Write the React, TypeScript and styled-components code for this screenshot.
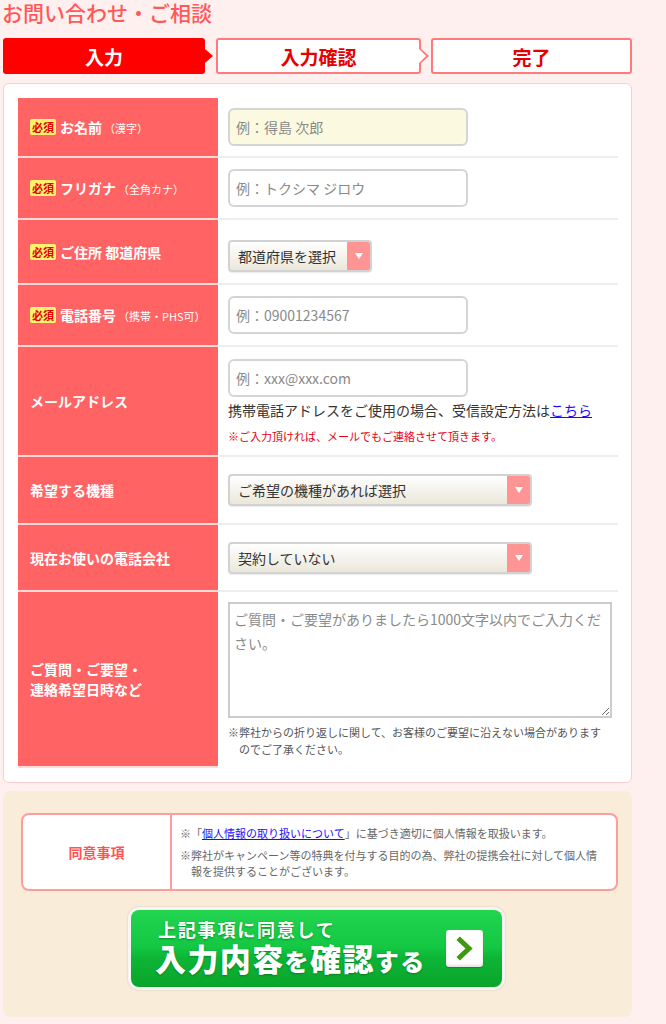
import React from 'react';
import styled, { createGlobalStyle, css } from 'styled-components';

const GlobalStyle = createGlobalStyle`
  * { box-sizing: border-box; }
  body {
    margin: 0;
    background: #fff0f0;
    color: #333;
    font-family: "Noto Sans CJK JP", "Noto Sans", sans-serif;
  }
`;

const FONT = `"Noto Sans CJK JP", "Noto Sans", sans-serif`;

const Page = styled.div`
  width: 632px;
  padding-left: 3px;
`;

const Title = styled.h1`
  margin: 0 0 13px -1px;
  font-size: 21px;
  line-height: 25px;
  font-weight: 500;
  color: #ff5858;
`;

const Steps = styled.ol`
  display: flex;
  list-style: none;
  margin: 0 0 9px;
  padding: 0;
`;

const Step = styled.li<{ $active?: boolean; $arrow?: boolean; $w?: number; $gap?: number }>`
  position: relative;
  ${(p) => (p.$w ? `width: ${p.$w}px; flex-shrink: 0;` : 'flex: 1;')}
  margin-right: ${(p) => p.$gap ?? 0}px;
  height: 36px;
  border-radius: 3px;
  display: flex;
  align-items: center;
  justify-content: center;
  font-size: 19px;
  font-weight: 700;
  ${(p) =>
    p.$active
      ? css`
          background: #ff0000;
          color: #fff;
        `
      : css`
          background: #fff;
          color: #e60000;
          border: 2px solid #ff7a7a;
        `}
  ${(p) =>
    p.$arrow &&
    (p.$active
      ? css`
          &::after {
            content: '';
            position: absolute;
            right: -8px;
            top: 50%;
            margin-top: -7px;
            border-left: 8px solid #ff0000;
            border-top: 7px solid transparent;
            border-bottom: 7px solid transparent;
          }
        `
      : css`
          &::before {
            content: '';
            position: absolute;
            right: -10px;
            top: 50%;
            margin-top: -9px;
            border-left: 10px solid #ff7a7a;
            border-top: 9px solid transparent;
            border-bottom: 9px solid transparent;
          }
          &::after {
            content: '';
            position: absolute;
            right: -7px;
            top: 50%;
            margin-top: -7px;
            border-left: 7px solid #fff;
            border-top: 7px solid transparent;
            border-bottom: 7px solid transparent;
          }
        `)}
`;

const Card = styled.section`
  background: #fff;
  border: 1px solid #ffcdcd;
  border-radius: 6px;
  padding: 14px 13px 14px 14px;
`;

const Row = styled.div<{ $h: number }>`
  display: flex;
  height: ${(p) => p.$h}px;
`;

const Label = styled.div`
  width: 200px;
  flex-shrink: 0;
  background: #ff6363;
  color: #fff;
  font-weight: 700;
  font-size: 14px;
  line-height: 20px;
  padding: 0 12px;
  display: flex;
  align-items: center;
  border-bottom: 2px solid #ffdada;
`;

const Required = styled.span`
  display: inline-block;
  background: #fff36e;
  color: #e60000;
  font-size: 11px;
  line-height: 16px;
  padding: 0 2px;
  border-radius: 2px;
  margin-right: 4px;
  vertical-align: 1px;
`;

const LabelSub = styled.span`
  font-size: 11px;
  font-weight: 400;
  margin-left: 2px;
`;

const Value = styled.div<{ $last?: boolean }>`
  flex: 1;
  padding: 0 10px;
  border-bottom: 2px solid ${(p) => (p.$last ? 'transparent' : '#eeeeee')};
  display: flex;
  flex-direction: column;
  justify-content: center;
  align-items: flex-start;
`;

const TextInput = styled.input<{ $focus?: boolean }>`
  width: 240px;
  height: 38px;
  border: 2px solid #d4d4d4;
  border-radius: 6px;
  padding: 0 6px;
  font: 14px ${FONT};
  color: #333;
  outline: none;
  background: ${(p) => (p.$focus ? '#fbf9df' : '#fff')};
  &::placeholder {
    color: #8a8a8a;
  }
`;

const Select = styled.div<{ $w: number; $mt?: number }>`
  width: ${(p) => p.$w}px;
  height: 32px;
  margin-top: ${(p) => p.$mt ?? 0}px;
  display: flex;
  border: 2px solid #d2d2d2;
  border-radius: 4px;
  overflow: hidden;
  background: linear-gradient(#ffffff, #ebe7da);
  font-size: 14px;
  color: #333;
  box-shadow: 0 1px 1px rgba(0, 0, 0, 0.08);
`;

const SelectText = styled.span`
  flex: 1;
  padding-left: 8px;
  line-height: 28px;
`;

const SelectArrow = styled.span`
  width: 23px;
  background: #ff9494;
  display: flex;
  align-items: center;
  justify-content: center;
  &::after {
    content: '';
    border-top: 6px solid #fff;
    border-left: 4px solid transparent;
    border-right: 4px solid transparent;
  }
`;

const Help = styled.p`
  margin: 3px 0 0;
  font-size: 14px;
  line-height: 20px;
  color: #333;
  white-space: nowrap;
`;

const Link = styled.a`
  color: #1a0dff;
  text-decoration: underline;
`;

const Caution = styled.p`
  margin: 9px 0 0;
  font-size: 11px;
  line-height: 14px;
  color: #e60012;
`;

const Textarea = styled.textarea`
  width: 384px;
  height: 116px;
  margin-top: 2px;
  border: 2px solid #cccccc;
  padding: 3px 4px;
  font: 14px/24px ${FONT};
  color: #333;
  outline: none;
  &::placeholder {
    color: #8a8a8a;
  }
`;

const Note = styled.p`
  margin: 6px 0 0;
  font-size: 11px;
  line-height: 17px;
  color: #555;
  padding-left: 1em;
  text-indent: -1em;
`;

const Consent = styled.section`
  margin-top: 8px;
  background: #f9ecd8;
  border-radius: 8px;
  padding: 22px 14px 27px 18px;
`;

const Agree = styled.div`
  display: flex;
  height: 78px;
  background: #fff;
  border: 2px solid #ff9d9d;
  border-radius: 8px;
  overflow: hidden;
`;

const AgreeHead = styled.div`
  width: 149px;
  flex-shrink: 0;
  border-right: 2px solid #ff9d9d;
  display: flex;
  align-items: center;
  justify-content: center;
  color: #ff5454;
  font-weight: 700;
  font-size: 14px;
`;

const AgreeBody = styled.div`
  flex: 1;
  padding: 0 12px 0 8px;
  display: flex;
  flex-direction: column;
  justify-content: center;
  gap: 6px;
  font-size: 11px;
  line-height: 16px;
  color: #666;
`;

const AgreeLine = styled.p`
  margin: 0;
  padding-left: 1em;
  text-indent: -1em;
`;

const SubmitWrap = styled.div`
  margin: 16px 0 0 107px;
  width: 377px;
  padding: 3px;
  border-radius: 11px;
  background: #f6f6f2;
  box-shadow: 0 0 2px rgba(0, 0, 0, 0.18);
`;

const Submit = styled.button`
  width: 100%;
  height: 77px;
  border: 0;
  border-radius: 8px;
  background: linear-gradient(#22d44f 0%, #14c843 48%, #0db536 62%, #0aa52a 100%);
  display: flex;
  align-items: center;
  justify-content: space-between;
  padding: 0 19px 0 24px;
  color: #fff;
  font-family: ${FONT};
  text-align: left;
  cursor: pointer;
  text-shadow: 0 1px 2px rgba(0, 90, 20, 0.55);
`;

const SubmitLabel = styled.span`
  display: flex;
  flex-direction: column;
  gap: 2px;
`;

const SubmitLead = styled.span`
  font-size: 18px;
  font-weight: 700;
  line-height: 20px;
  letter-spacing: 1.8px;
  padding-left: 3px;
`;

const SubmitMain = styled.span`
  font-size: 31px;
  font-weight: 900;
  line-height: 34px;
  letter-spacing: 1.4px;
`;

const SubmitSmall = styled.span`
  font-size: 24px;
`;

const ChevronBox = styled.span`
  width: 37px;
  height: 37px;
  border-radius: 3px;
  background: #fff;
  box-shadow: inset 0 -2px 3px rgba(0, 0, 0, 0.12), 0 1px 1px rgba(0, 60, 0, 0.3);
  display: flex;
  align-items: center;
  justify-content: center;
`;

const Chevron = () => (
  <svg width="37" height="37" viewBox="0 0 37 37">
    <polyline
      points="14,10 23,18.5 14,27"
      fill="none"
      stroke="#3e9a0c"
      strokeWidth="5"
      strokeLinecap="square"
      strokeLinejoin="miter"
    />
  </svg>
);

function App() {
  return (
    <Page>
      <GlobalStyle />
      <Title>お問い合わせ・ご相談</Title>

      <Steps>
        <Step $active $arrow $w={202} $gap={11}>入力</Step>
        <Step $arrow $w={205} $gap={10}>入力確認</Step>
        <Step>完了</Step>
      </Steps>

      <Card>
        <Row $h={60}>
          <Label>
            <span>
              <Required>必須</Required>お名前<LabelSub>（漢字）</LabelSub>
            </span>
          </Label>
          <Value>
            <TextInput $focus placeholder="例：得島 次郎" />
          </Value>
        </Row>
        <Row $h={62}>
          <Label>
            <span>
              <Required>必須</Required>フリガナ<LabelSub>（全角カナ）</LabelSub>
            </span>
          </Label>
          <Value>
            <TextInput placeholder="例：トクシマ ジロウ" />
          </Value>
        </Row>
        <Row $h={65}>
          <Label>
            <span>
              <Required>必須</Required>ご住所 都道府県
            </span>
          </Label>
          <Value>
            <Select $w={144} $mt={8}>
              <SelectText>都道府県を選択</SelectText>
              <SelectArrow />
            </Select>
          </Value>
        </Row>
        <Row $h={62}>
          <Label>
            <span>
              <Required>必須</Required>電話番号<LabelSub>（携帯・PHS可）</LabelSub>
            </span>
          </Label>
          <Value>
            <TextInput placeholder="例：09001234567" />
          </Value>
        </Row>
        <Row $h={110}>
          <Label>メールアドレス</Label>
          <Value>
            <TextInput placeholder="例：xxx@xxx.com" />
            <Help>
              携帯電話アドレスをご使用の場合、受信設定方法は<Link href="#">こちら</Link>
            </Help>
            <Caution>※ご入力頂ければ、メールでもご連絡させて頂きます。</Caution>
          </Value>
        </Row>
        <Row $h={68}>
          <Label>希望する機種</Label>
          <Value>
            <Select $w={304}>
              <SelectText>ご希望の機種があれば選択</SelectText>
              <SelectArrow />
            </Select>
          </Value>
        </Row>
        <Row $h={67}>
          <Label>現在お使いの電話会社</Label>
          <Value>
            <Select $w={304}>
              <SelectText>契約していない</SelectText>
              <SelectArrow />
            </Select>
          </Value>
        </Row>
        <Row $h={176}>
          <Label>
            <span>
              ご質問・ご要望・
              <br />
              連絡希望日時など
            </span>
          </Label>
          <Value $last>
            <Textarea placeholder="ご質問・ご要望がありましたら1000文字以内でご入力ください。" />
            <Note>※弊社からの折り返しに関して、お客様のご要望に沿えない場合がありますのでご了承ください。</Note>
          </Value>
        </Row>
      </Card>

      <Consent>
        <Agree>
          <AgreeHead>同意事項</AgreeHead>
          <AgreeBody>
            <AgreeLine>
              ※「<Link href="#">個人情報の取り扱いについて</Link>」に基づき適切に個人情報を取扱います。
            </AgreeLine>
            <AgreeLine>
              ※弊社がキャンペーン等の特典を付与する目的の為、弊社の提携会社に対して個人情報を提供することがございます。
            </AgreeLine>
          </AgreeBody>
        </Agree>
        <SubmitWrap>
          <Submit type="button">
            <SubmitLabel>
              <SubmitLead>上記事項に同意して</SubmitLead>
              <SubmitMain>
                入力内容<SubmitSmall>を</SubmitSmall>確認<SubmitSmall>する</SubmitSmall>
              </SubmitMain>
            </SubmitLabel>
            <ChevronBox>
              <Chevron />
            </ChevronBox>
          </Submit>
        </SubmitWrap>
      </Consent>
    </Page>
  );
}

export default App;
